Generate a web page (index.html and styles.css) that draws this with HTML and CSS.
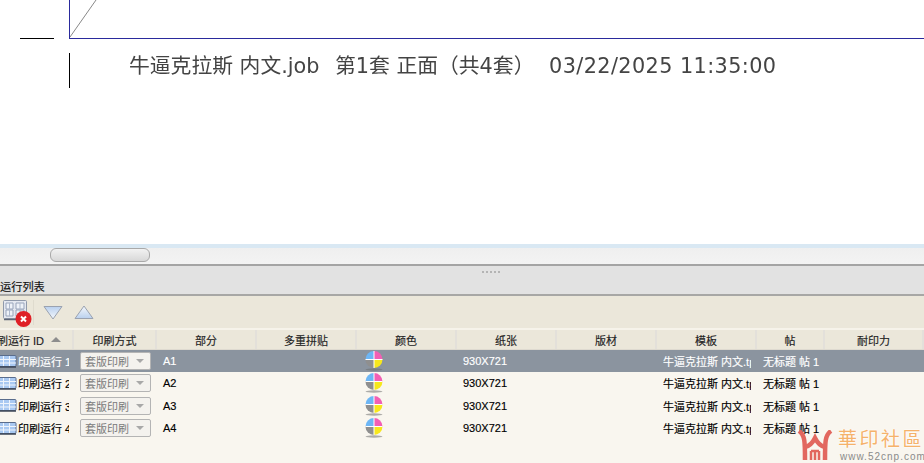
FILE: index.html
```html
<!DOCTYPE html>
<html lang="zh">
<head>
<meta charset="utf-8">
<title>运行列表</title>
<link rel="stylesheet" href="styles.css">
</head>
<body>
<div class="app">
  <section class="canvas">
    <svg class="marks" width="924" height="244" viewBox="0 0 924 244">
      <line x1="69.5" y1="0" x2="69.5" y2="38" stroke="#2a2a9c"/>
      <line x1="69" y1="38.5" x2="924" y2="38.5" stroke="#2a2a9c"/>
      <line x1="70" y1="37" x2="96" y2="0" stroke="#555" stroke-width="0.7"/>
      <line x1="20" y1="38.5" x2="54" y2="38.5" stroke="#000"/>
      <line x1="69.5" y1="53" x2="69.5" y2="88" stroke="#000"/>
    </svg>
    <div class="slug">
      <span class="slug-name">牛逼克拉斯 内文.job</span>
      <span class="slug-set">第1套 正面（共4套）</span>
      <span class="slug-date">03/22/2025 11:35:00</span>
    </div>
  </section>
  <div class="hscroll"><div class="thumb"></div></div>
  <div class="sash"><span class="grip"></span></div>
  <div class="panel-title">运行列表</div>
  <div class="toolbar">
    <svg class="tool-del" width="32" height="30" viewBox="0 0 32 30">
      <rect x="3.500" y="1.500" width="23" height="18" rx="1" fill="#e4e8f0" stroke="#8f99aa"/>
      <path d="M4 20.500h22" stroke="#5d6576" stroke-width="1.500"/>
      <path d="M6 4h7v6H6zM6 11h7v6H6zM16 4h8v6h-8zM16 11h8v6h-8z" fill="#eef2f8" stroke="#98a4ba"/>
      <path d="M9.500 4v13M20 4v13" stroke="#aeb9cc"/>
      <circle cx="23.500" cy="20" r="8" fill="#df2027"/>
      <path d="M21 17.500l5 5m0-5l-5 5" stroke="#fff" stroke-width="2"/>
    </svg>
    <span class="tool-sep"></span>
    <svg class="tool-tri" width="20" height="15" viewBox="0 0 20 15">
      <defs>
        <linearGradient id="triDown" x1="0" y1="0" x2="0" y2="1"><stop offset="0" stop-color="#b9d0ee"/><stop offset="1" stop-color="#f5f8fc"/></linearGradient>
        <linearGradient id="triUp" x1="0" y1="0" x2="0" y2="1"><stop offset="0" stop-color="#f5f8fc"/><stop offset="1" stop-color="#b9d0ee"/></linearGradient>
      </defs>
      <path d="M1 1.500h18L10 14z" fill="url(#triDown)" stroke="#9aa2b0"/>
    </svg>
    <svg class="tool-tri" width="20" height="15" viewBox="0 0 20 15">
      <path d="M1 13.500h18L10 1z" fill="url(#triUp)" stroke="#9aa2b0"/>
    </svg>
  </div>
  <div class="table">
    <div class="row head">
      <div class="c c-id">刷运行 ID <i class="sort"></i></div>
      <div class="c c-mode">印刷方式</div>
      <div class="c c-part">部分</div>
      <div class="c c-multi">多重拼贴</div>
      <div class="c c-color">颜色</div>
      <div class="c c-paper">纸张</div>
      <div class="c c-plate">版材</div>
      <div class="c c-tpl">模板</div>
      <div class="c c-sig">帖</div>
      <div class="c c-dur">耐印力</div>
    </div>
    <div class="row sel">
      <div class="c c-id"><svg class="grid-ico" width="17" height="13" viewBox="0 0 17 13"><use href="#gridIcon"/></svg><span class="clip">印刷运行 1</span></div>
      <div class="c c-mode"><span class="select">套版印刷<i></i></span></div>
      <div class="c c-part">A1</div><div class="c c-multi"></div>
      <div class="c c-color"><svg class="cmyk" width="20" height="22" viewBox="0 0 20 22"><use href="#cmykIcon"/></svg></div>
      <div class="c c-paper">930X721</div><div class="c c-plate"></div>
      <div class="c c-tpl"><span class="clip">牛逼克拉斯 内文.tpl</span></div>
      <div class="c c-sig">无标题 帖 1</div><div class="c c-dur"></div>
    </div>
    <div class="row">
      <div class="c c-id"><svg class="grid-ico" width="17" height="13" viewBox="0 0 17 13"><use href="#gridIcon"/></svg><span class="clip">印刷运行 2</span></div>
      <div class="c c-mode"><span class="select">套版印刷<i></i></span></div>
      <div class="c c-part">A2</div><div class="c c-multi"></div>
      <div class="c c-color"><svg class="cmyk" width="20" height="22" viewBox="0 0 20 22"><use href="#cmykIcon"/></svg></div>
      <div class="c c-paper">930X721</div><div class="c c-plate"></div>
      <div class="c c-tpl"><span class="clip">牛逼克拉斯 内文.tpl</span></div>
      <div class="c c-sig">无标题 帖 1</div><div class="c c-dur"></div>
    </div>
    <div class="row">
      <div class="c c-id"><svg class="grid-ico" width="17" height="13" viewBox="0 0 17 13"><use href="#gridIcon"/></svg><span class="clip">印刷运行 3</span></div>
      <div class="c c-mode"><span class="select">套版印刷<i></i></span></div>
      <div class="c c-part">A3</div><div class="c c-multi"></div>
      <div class="c c-color"><svg class="cmyk" width="20" height="22" viewBox="0 0 20 22"><use href="#cmykIcon"/></svg></div>
      <div class="c c-paper">930X721</div><div class="c c-plate"></div>
      <div class="c c-tpl"><span class="clip">牛逼克拉斯 内文.tpl</span></div>
      <div class="c c-sig">无标题 帖 1</div><div class="c c-dur"></div>
    </div>
    <div class="row">
      <div class="c c-id"><svg class="grid-ico" width="17" height="13" viewBox="0 0 17 13"><use href="#gridIcon"/></svg><span class="clip">印刷运行 4</span></div>
      <div class="c c-mode"><span class="select">套版印刷<i></i></span></div>
      <div class="c c-part">A4</div><div class="c c-multi"></div>
      <div class="c c-color"><svg class="cmyk" width="20" height="22" viewBox="0 0 20 22"><use href="#cmykIcon"/></svg></div>
      <div class="c c-paper">930X721</div><div class="c c-plate"></div>
      <div class="c c-tpl"><span class="clip">牛逼克拉斯 内文.tpl</span></div>
      <div class="c c-sig">无标题 帖 1</div><div class="c c-dur"></div>
    </div>
  </div>
  <div class="watermark">
    <svg class="wm-logo" width="36" height="32" viewBox="0 0 36 32">
      <g fill="none" stroke="#e2675f" stroke-width="4.500">
        <path d="M2 1C8 5 8 12 8 30"/>
        <path d="M34 1C28 5 28 12 28 30"/>
        <path d="M8 17Q14 16 18 8Q22 16 28 17"/>
      </g>
      <path d="M14 21h8M14 21v9M22 21v9M18 21v9" fill="none" stroke="#e2675f" stroke-width="2.500"/>
    </svg>
    <div class="wm-text"><span class="wm-name">華印社區</span><span class="wm-url">www.52cnp.com</span></div>
  </div>
</div>
<svg class="defs" width="0" height="0">
  <defs>
    <symbol id="gridIcon" viewBox="0 0 17 13">
      <rect x="-3" y="0.500" width="19" height="11" rx="1" fill="#a9c9f2" stroke="#5a6d8c"/>
      <path d="M-3 12h19" stroke="#3d4656" stroke-width="1.500"/>
      <path d="M3.500 1v10M9.500 1v10M-3 4.500h19M-3 8h19" stroke="#eef4fc"/>
    </symbol>
    <symbol id="cmykIcon" viewBox="0 0 20 22">
      <path d="M10 9.500V1a8.500 8.500 0 0 0-8.500 8.500z" fill="#6db6f5"/>
      <path d="M10 9.500V1a8.500 8.500 0 0 1 8.500 8.500z" fill="#f25fb4"/>
      <path d="M10 9.500v8.500a8.500 8.500 0 0 1-8.500-8.500z" fill="#8f8f8f"/>
      <path d="M10 9.500v8.500a8.500 8.500 0 0 0 8.500-8.500z" fill="#f7e71c"/>
      <path d="M10 1v17M1.500 9.500h17" stroke="#fff" stroke-width="1"/>
      <ellipse cx="10" cy="19.500" rx="8.500" ry="1.200" fill="#6d6d6d" opacity=".55"/>
    </symbol>
  </defs>
</svg>
</body>
</html>
```

FILE: styles.css
```css
* { box-sizing: border-box; }
html, body { margin: 0; padding: 0; }
body {
  width: 924px;
  height: 463px;
  overflow: hidden;
  font-family: "Liberation Sans", "Noto Sans CJK SC", sans-serif;
  font-size: 11px;
  color: #000;
  -webkit-text-stroke: 0.15px currentColor;
}
.app { position: relative; width: 924px; height: 463px; display: flex; flex-direction: column; background: #f9f6ef; }
.canvas { position: relative; height: 244px; background: #fff; flex: none; }
.marks { position: absolute; left: 0; top: 0; display: block; }
.slug {
  position: absolute;
  left: 129px;
  top: 53px;
  display: flex;
  font-family: "DejaVu Sans", "Noto Sans CJK SC", sans-serif;
  font-size: 20.800px;
  line-height: 26px;
  color: #444;
  white-space: nowrap;
  filter: blur(0.35px);
  -webkit-text-stroke: 0;
}
.slug-name { width: 206px; }
.slug-set { width: 214px; }
.slug-date { letter-spacing: 0.4px; }
.hscroll {
  flex: none;
  height: 20px;
  background: linear-gradient(#d9e8f3 0, #d9e8f3 4px, #efefef 4px, #f3f3f3 100%);
  padding: 4px 0 0 50px;
}
.thumb {
  width: 100px;
  height: 14px;
  border: 1px solid #a9a9a9;
  border-radius: 6px;
  background: linear-gradient(#f2f2f2, #d8d8d8);
}
.sash {
  flex: none;
  height: 14px;
  background: #e2e2e2;
  border-top: 2px solid #a4a4a4;
  display: flex;
  justify-content: center;
  align-items: center;
}
.grip { display: block; width: 18px; height: 2px; background: repeating-linear-gradient(90deg, #b4b4b4 0 2px, transparent 2px 4px); margin-left: 58px; }
.panel-title {
  flex: none;
  height: 18px;
  background: #e2e2e2;
  border-bottom: 2px solid #a7a7a5;
  font-size: 11.200px;
  line-height: 18px;
  color: #111;
}
.toolbar {
  flex: none;
  height: 32px;
  background: #ebe7da;
  display: flex;
  align-items: center;
}
.tool-del { display: block; margin-top: 3px; flex: none; }
.tool-sep { width: 1px; height: 25px; background: #dfdbce; margin: 0 9px 0 1px; }
.tool-tri { display: block; margin-right: 11px; }
.table { flex: 1; display: flex; flex-direction: column; }
.row { display: flex; height: 22.500px; align-items: center; flex: none; }
.head {
  height: 22px;
  background: #ebe7da;
  border-top: 2px solid #f6f3ea;
  border-bottom: 1px solid #dedad0;
  color: #222;
}
.head .c { justify-content: center; height: 100%; border-right: 2px solid #e3e0da; padding: 0; }
.sel { background: #8b949f; color: #fff; height: 22px; }
.c { display: flex; align-items: center; padding-left: 6px; white-space: nowrap; overflow: hidden; height: 100%; flex: none; }
.c-id { width: 74px; padding-left: 0; }
.head .c-id { justify-content: flex-start; width: 74px; text-indent: -3px; }
.c-mode { width: 83px; }
.c-part { width: 100px; }
.c-multi { width: 100px; }
.c-color { width: 100px; padding-left: 7px; }
.c-paper { width: 100px; }
.c-plate { width: 100px; }
.c-tpl { width: 100px; }
.c-sig { width: 68px; }
.c-dur { width: 99px; }
.sort { display: inline-block; width: 0; height: 0; margin-left: 7px; border: 5px solid transparent; border-top: 0; border-bottom: 5px solid #8d8d8d; }
.grid-ico { display: block; flex: none; margin-right: 1px; overflow: visible; }
.clip { display: block; overflow: hidden; white-space: nowrap; }
.c-id .clip { width: 51px; }
.c-tpl .clip { width: 88px; }
.select {
  display: flex;
  align-items: center;
  width: 71px;
  height: 18px;
  padding-left: 4px;
  background: #f4f2ee;
  border: 1px solid #b4b4b4;
  border-radius: 2px;
  color: #7a7a7a;
  -webkit-text-stroke: 0;
}
.select i { margin-left: 7px; width: 0; height: 0; border: 4px solid transparent; border-bottom: 0; border-top: 4px solid #a8a8a8; }
.cmyk { display: block; overflow: visible; }
.watermark { position: absolute; right: 0; bottom: 0; width: 127px; height: 38px; display: flex; align-items: flex-start; -webkit-text-stroke: 0; }
.wm-logo { display: block; margin: 5px 0 0 0; flex: none; }
.wm-text { display: flex; flex-direction: column; margin-left: 5px; }
.wm-name { font-family: "Noto Sans CJK TC", sans-serif; font-size: 19px; line-height: 26px; color: #f5b26b; letter-spacing: 2.500px; white-space: nowrap; text-shadow: 0 0 2px #fff, 0 0 2px #fff; }
.wm-url { font-family: "Liberation Sans", sans-serif; font-size: 10px; line-height: 12px; letter-spacing: 1px; padding-left: 2px; color: #8a8a8a; white-space: nowrap; }
.defs { position: absolute; }
```
